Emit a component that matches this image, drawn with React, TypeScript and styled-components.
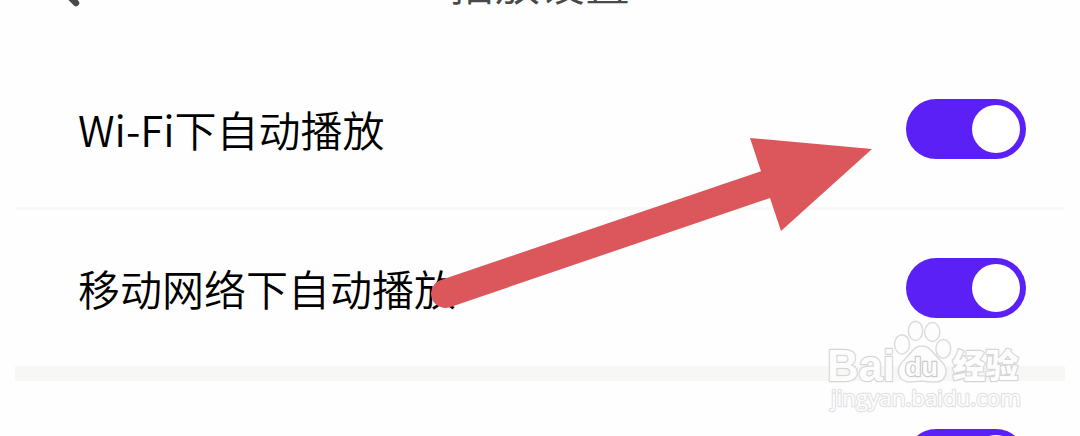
import React from "react";
import styled, { createGlobalStyle } from "styled-components";

const GlobalStyle = createGlobalStyle`
    body {
        margin: 0;
        background: #fefefe;
        overflow: hidden;
        font-family: "Noto Sans CJK SC", sans-serif;
    }
`

interface SettingRowProps {
    label: string,
    on: boolean
}

const SettingRow = ({ label, on }: SettingRowProps) => (
    <StyledRow>
        <Label>{label}</Label>
        <Switch role="switch" aria-checked={on} $on={on}>
            <Knob />
        </Switch>
    </StyledRow>
)

const BackIcon = () => (
    <svg width="30" height="52" viewBox="0 0 30 52" fill="none" stroke="#474a48" strokeWidth="6.5">
        <path d="M26 4 L4 26 L26 48" strokeLinejoin="round" strokeLinecap="round" />
    </svg>
)

const Arrow = () => (
    <Overlay $left={420} $top={130}>
        <svg width="460" height="185" viewBox="420 130 460 185">
            <path d="M440.9 280 L761 171.3 L750 138 L872 149 L781 231 L770 198 L449.8 307.2 A14.2 14.2 0 0 1 440.9 280 Z" fill="#db575b" />
        </svg>
    </Overlay>
)

const Watermark = () => (
    <Overlay $left={820} $top={315}>
        <svg width="210" height="105" viewBox="820 315 210 105" fill="#fdfdfd" stroke="#dcdcdc" strokeWidth="1.5">
            <ellipse cx="902" cy="344.3" rx="7.5" ry="9.6" />
            <ellipse cx="915.5" cy="330.8" rx="7.2" ry="9.6" />
            <ellipse cx="932.3" cy="332" rx="7.6" ry="9.4" />
            <ellipse cx="943.3" cy="348.8" rx="7.4" ry="9.4" />
            <path d="M922 346 C931 346 933 354 940 360 C946 365 948 372 944 378 C940 384 931 382 922 381 C913 382 904 384 900 377 C896 370 900 363 905 359 C911 354 913 346 922 346 Z" />
            <WatermarkText x="827" y="380.5" textLength="68" lengthAdjust="spacingAndGlyphs" $size={45} $weight={700} $color="#d6d6d6">Bai</WatermarkText>
            <WatermarkText x="905" y="375.5" textLength="33" lengthAdjust="spacingAndGlyphs" $size={26} $weight={700} $color="#cbcbcb">du</WatermarkText>
            <WatermarkText x="952.5" y="378" textLength="66" $size={33} $weight={900} $color="#d6d6d6" $family="Noto Sans CJK SC">经验</WatermarkText>
            <WatermarkText x="831" y="406" textLength="190" lengthAdjust="spacingAndGlyphs" $size={22.5} $weight={400} $color="#e3e3e3" $family="Open Sans">jingyan.baidu.com</WatermarkText>
        </svg>
    </Overlay>
)

const App = () => {
    return (
        <Page>
            <GlobalStyle />
            <Header>
                <BackIcon />
                <Title>播放设置</Title>
            </Header>
            <List>
                <SettingRow label="Wi-Fi下自动播放" on />
                <Divider $size={3} />
                <SettingRow label="移动网络下自动播放" on />
                <Divider $size={15} />
                <SettingRow label="" on />
            </List>
            <Arrow />
            <Watermark />
        </Page>
    )
}

const Page = styled.div`
    display: flow-root;
    position: relative;
    width: 1080px;
    height: 436px;
    overflow: hidden;
`

/* scrolled mostly out of view */
const Header = styled.header`
    display: grid;
    grid-template-columns: 30px 1fr 30px;
    align-items: center;
    height: 141px;
    margin-top: -90px;
    padding: 0 50px;
    box-sizing: border-box;
`

const Title = styled.div`
    padding-top: 2px;
    color: #474a48;
    font-family: "Noto Sans CJK SC DemiLight", "Noto Sans CJK SC", sans-serif;
    font-size: 45px;
    line-height: 60px;
    text-align: center;
`

const List = styled.div`
    padding: 0 15px;
`

const StyledRow = styled.div`
    display: flex;
    align-items: center;
    justify-content: space-between;
    height: 156px;
    padding: 0 39px 0 63px;
`

const Label = styled.div`
    color: #000;
    font-family: "Noto Sans CJK SC DemiLight", "Noto Sans CJK SC", sans-serif;
    font-size: 42px;
    font-weight: 350;
    line-height: 60px;
    white-space: nowrap;
`

const Switch = styled.div<{ $on: boolean }>`
    display: flex;
    justify-content: ${({ $on }) => ($on ? "flex-end" : "flex-start")};
    width: 120px;
    height: 60px;
    padding: 6px;
    border-radius: 30px;
    background: ${({ $on }) => ($on ? "#5a20f6" : "#d8d8d8")};
    box-sizing: border-box;
`

const Knob = styled.div`
    width: 48px;
    height: 48px;
    border-radius: 50%;
    background: #fff;
`

const Divider = styled.div<{ $size: number }>`
    height: ${({ $size }) => $size}px;
    background: ${({ $size }) => ($size > 3 ? "#f7f8f6" : "#f8f8f7")};
`

const Overlay = styled.div<{ $left: number, $top: number }>`
    position: absolute;
    left: ${({ $left }) => $left}px;
    top: ${({ $top }) => $top}px;
    pointer-events: none;

    svg {
        display: block;
    }
`

const WatermarkText = styled.text<{ $size: number, $weight: number, $color: string, $family?: string }>`
    font-family: "${({ $family }) => $family || "Liberation Sans"}", "Noto Sans CJK SC", sans-serif;
    font-size: ${({ $size }) => $size}px;
    font-weight: ${({ $weight }) => $weight};
    paint-order: stroke;
    stroke: ${({ $color }) => $color};
    stroke-width: 2.4px;
    stroke-linejoin: round;
`

export default App
